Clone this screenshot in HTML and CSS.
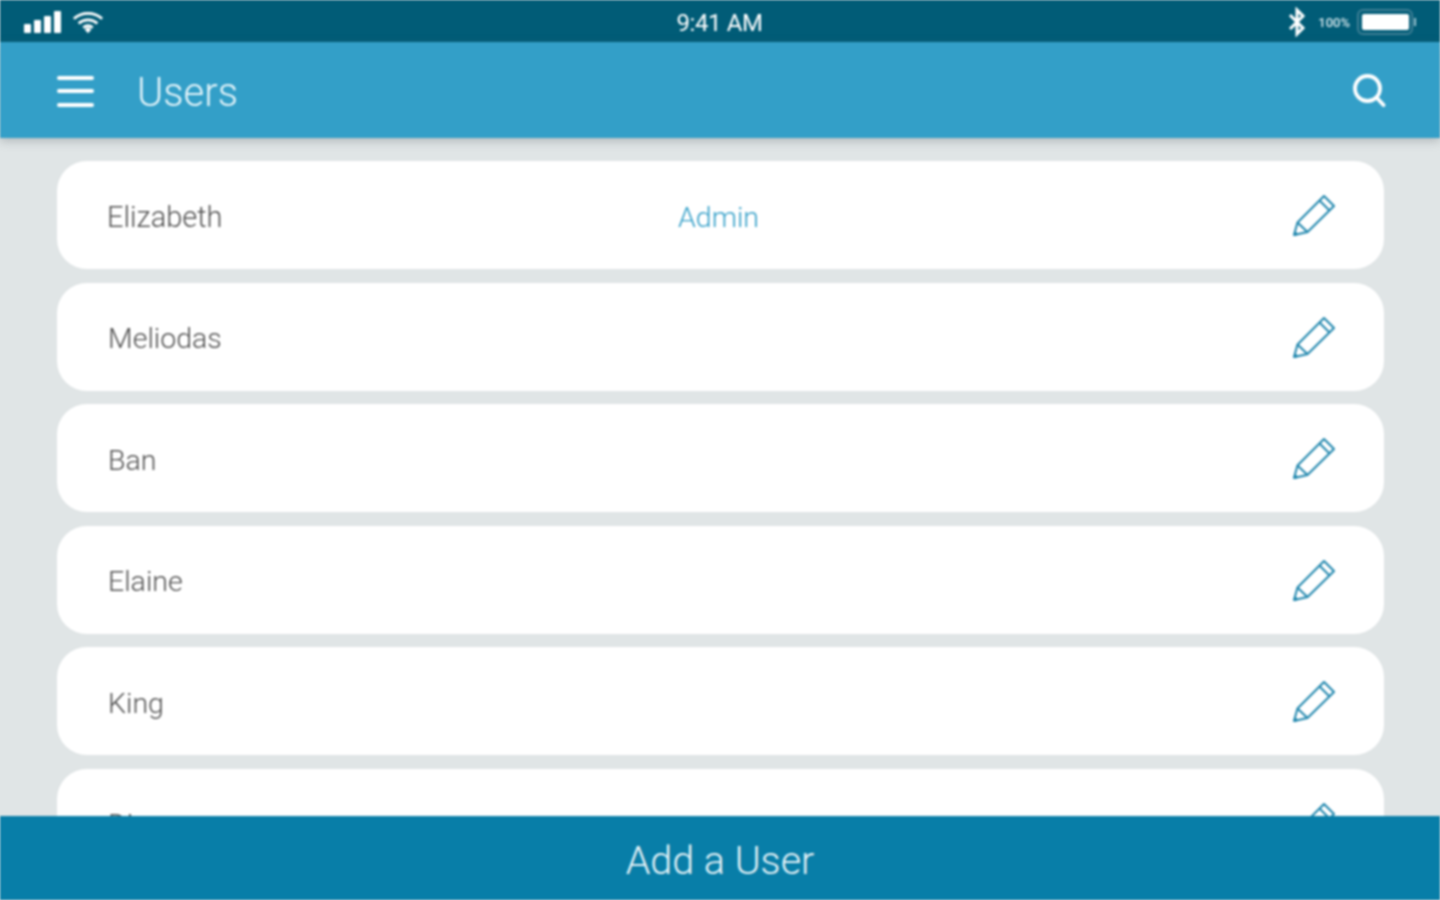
FILE: index.html
```html
<!DOCTYPE html>
<html lang="en">
<head>
<meta charset="utf-8">
<title>Users</title>
<link rel="stylesheet" href="styles.css">
</head>
<body>
<div class="app">
  <div class="status">
    <div class="status-left">
      <svg class="signal" viewBox="0 0 40 22" width="40" height="22"><rect x="1" y="13" width="7" height="9" rx="1"/><rect x="11" y="9" width="7" height="13" rx="1"/><rect x="21" y="5" width="7" height="17" rx="1"/><rect x="31" y="0" width="7" height="22" rx="1"/></svg>
      <svg class="wifi" viewBox="0 0 34 24" width="32" height="24"><path d="M2 8.500C10.500 1 23.500 1 32 8.500M7 13.500C13 8.500 21 8.500 27 13.500M12 18C15 15.500 19 15.500 22 18" fill="none" stroke="#fff" stroke-width="3"/><path d="M13.500 20L17 17.500L20.500 20L17 24Z" fill="#fff"/></svg>
    </div>
    <div class="clock">9:41 AM</div>
    <div class="status-right">
      <svg class="bt" viewBox="0 0 20 30" width="20" height="30"><path d="M3 8L16 21L10 27V3L16 9L3 22" fill="none" stroke="#fff" stroke-width="3"/></svg>
      <span class="pct">100%</span>
      <span class="battery"><span class="charge"></span></span>
      <span class="nub"></span>
    </div>
  </div>
  <header class="bar">
    <div class="bar-left">
      <div class="burger"><span></span><span></span><span></span></div>
      <h1 class="title">Users</h1>
    </div>
    <svg class="search" viewBox="0 0 34 34" width="34" height="34"><circle cx="15.500" cy="15.500" r="12.500" fill="none" stroke="#fff" stroke-width="3.800"/><path d="M24.500 24.500L31.500 32" stroke="#fff" stroke-width="3.800" stroke-linecap="round"/></svg>
  </header>
  <main class="list">
    <div class="card"><span class="name name-first">Elizabeth</span><span class="role">Admin</span><svg class="pen" viewBox="0 0 44 44" width="44" height="44"><use href="#pencil"/></svg></div>
    <div class="card"><span class="name">Meliodas</span><span class="role"></span><svg class="pen" viewBox="0 0 44 44" width="44" height="44"><use href="#pencil"/></svg></div>
    <div class="card"><span class="name">Ban</span><span class="role"></span><svg class="pen" viewBox="0 0 44 44" width="44" height="44"><use href="#pencil"/></svg></div>
    <div class="card"><span class="name">Elaine</span><span class="role"></span><svg class="pen" viewBox="0 0 44 44" width="44" height="44"><use href="#pencil"/></svg></div>
    <div class="card"><span class="name">King</span><span class="role"></span><svg class="pen" viewBox="0 0 44 44" width="44" height="44"><use href="#pencil"/></svg></div>
    <div class="card"><span class="name">Diane</span><span class="role"></span><svg class="pen" viewBox="0 0 44 44" width="44" height="44"><use href="#pencil"/></svg></div>
  </main>
  <footer class="add">Add a User</footer>
</div>
<svg class="defs" width="0" height="0"><defs><g id="pencil" fill="none" stroke="#1f86ad" stroke-width="2" stroke-linejoin="round"><path d="M3 43L6.500 30.500L33 4L43 14L16.500 40Z"/><path d="M6.500 30.500L16.500 40"/><path d="M28.500 8.500L38.500 18.500"/><path d="M3.500 40.500L6 43" stroke-width="3"/></g></defs></svg>
</body>
</html>
```
FILE: styles.css
```css
* { box-sizing: border-box; margin: 0; padding: 0; }
html, body { width: 100%; height: 100%; overflow: hidden; }
body { font-family: Roboto, "Liberation Sans", sans-serif; font-weight: 300; background: #e0e5e6; }
.app { width: 1440px; height: 900px; display: flex; flex-direction: column; filter: blur(0.8px); }
.status { flex: 0 0 42px; background: #015c77; color: #fff; display: grid; grid-template-columns: 1fr auto 1fr; align-items: center; padding: 2px 24px 0 23px; }
.status-left { display: flex; align-items: center; gap: 9px; }
.signal { fill: #fff; }
.signal, .wifi { display: block; }
.clock { font-size: 24px; font-weight: 400; letter-spacing: -0.4px; padding-top: 2px; position: relative; left: 0; }
.status-right { display: flex; align-items: center; justify-content: flex-end; }
.bt { display: block; margin-right: 11px; }
.pct { font-size: 13px; font-weight: 500; margin-right: 7px; color: #d9e9ee; }
.battery { width: 56px; height: 26px; border: 2px solid #3f7f95; border-radius: 6px; padding: 3px; display: block; }
.charge { display: block; width: 47px; height: 16px; background: #fff; border-radius: 2px; }
.nub { width: 2px; height: 8px; background: #9cc3cf; margin-left: 1px; }
.bar { flex: 0 0 96px; background: #339fc8; color: #fff; display: flex; align-items: center; justify-content: space-between; padding: 0 54px 0 57px; box-shadow: 0 3px 9px rgba(90, 100, 105, 0.35); position: relative; z-index: 1; }
.bar-left { display: flex; align-items: center; gap: 43px; }
.burger { display: flex; flex-direction: column; gap: 9.500px; width: 37px; padding-top: 2px; }
.burger span { display: block; height: 4px; background: #fff; border-radius: 2px; }
.title { font-size: 40px; font-weight: 300; color: #e8f6fb; padding-top: 4px; }
.search { display: block; }
.list { flex: 1 1 0; min-height: 0; overflow: hidden; padding: 23px 56px 0 57px; display: flex; flex-direction: column; gap: 13.600px; }
.card { flex: 0 0 108px; background: #fff; border-radius: 30px; display: grid; grid-template-columns: 571px 1fr 44px; align-items: center; padding: 0 49px 0 51px; color: #505050; font-size: 28.500px; }
.name, .role { padding-top: 4px; }
.name-first { position: relative; left: -1px; font-size: 29px; }
.role { color: #339fc8; position: relative; left: -1px; }
.pen { display: block; position: relative; top: -1px; }
.add { flex: 0 0 84px; background: #087ea8; color: #e6f3f8; font-size: 39.500px; padding-top: 4px; display: flex; align-items: center; justify-content: center; position: relative; z-index: 1; }
.defs { position: absolute; }
```
